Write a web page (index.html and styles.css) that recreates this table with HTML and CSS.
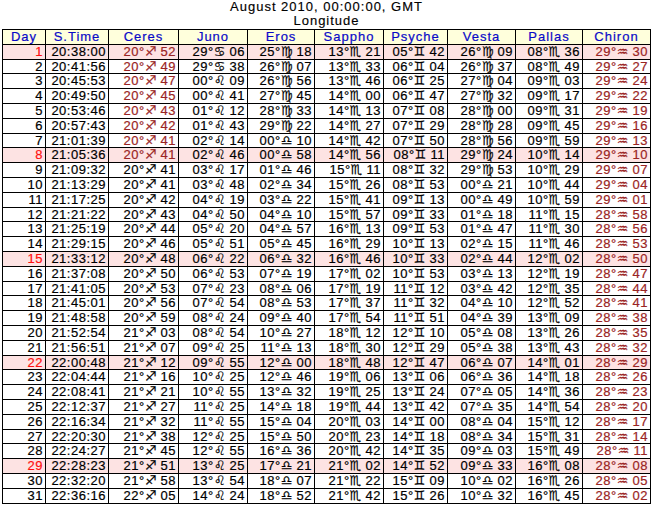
FILE: index.html
```html
<!DOCTYPE html>
<html>
<head>
<meta charset="utf-8">
<title>August 2010 Longitude</title>
<link rel="stylesheet" href="styles.css">
</head>
<body>
<div class="title">August 2010, 00:00:00, GMT<br>Longitude</div>
<table class="eph">
<colgroup>
<col class="c-day"><col class="c-time"><col class="c-ceres"><col class="c-juno"><col class="c-eros"><col class="c-sappho"><col class="c-psyche"><col class="c-vesta"><col class="c-pallas"><col class="c-chiron">
</colgroup>
<thead>
<tr><th>Day</th><th>S.Time</th><th>Ceres</th><th>Juno</th><th>Eros</th><th>Sappho</th><th>Psyche</th><th>Vesta</th><th>Pallas</th><th>Chiron</th></tr>
</thead>
<tbody>
<tr class="hl"><td class="day">1</td><td>20:38:00</td><td class="rx">20°<span class="z">&#x2650;&#xFE0E;</span> 52</td><td>29°<span class="z">&#x264B;&#xFE0E;</span> 06</td><td>25°<span class="z">&#x264D;&#xFE0E;</span> 18</td><td>13°<span class="z">&#x264F;&#xFE0E;</span> 21</td><td>05°<span class="z">&#x264A;&#xFE0E;</span> 42</td><td>26°<span class="z">&#x264D;&#xFE0E;</span> 09</td><td>08°<span class="z">&#x264F;&#xFE0E;</span> 36</td><td class="rx">29°<span class="z">&#x2652;&#xFE0E;</span> 30</td></tr>
<tr><td class="day">2</td><td>20:41:56</td><td class="rx">20°<span class="z">&#x2650;&#xFE0E;</span> 49</td><td>29°<span class="z">&#x264B;&#xFE0E;</span> 38</td><td>26°<span class="z">&#x264D;&#xFE0E;</span> 07</td><td>13°<span class="z">&#x264F;&#xFE0E;</span> 33</td><td>06°<span class="z">&#x264A;&#xFE0E;</span> 04</td><td>26°<span class="z">&#x264D;&#xFE0E;</span> 37</td><td>08°<span class="z">&#x264F;&#xFE0E;</span> 49</td><td class="rx">29°<span class="z">&#x2652;&#xFE0E;</span> 27</td></tr>
<tr><td class="day">3</td><td>20:45:53</td><td class="rx">20°<span class="z">&#x2650;&#xFE0E;</span> 47</td><td>00°<span class="z">&#x264C;&#xFE0E;</span> 09</td><td>26°<span class="z">&#x264D;&#xFE0E;</span> 56</td><td>13°<span class="z">&#x264F;&#xFE0E;</span> 46</td><td>06°<span class="z">&#x264A;&#xFE0E;</span> 25</td><td>27°<span class="z">&#x264D;&#xFE0E;</span> 04</td><td>09°<span class="z">&#x264F;&#xFE0E;</span> 03</td><td class="rx">29°<span class="z">&#x2652;&#xFE0E;</span> 24</td></tr>
<tr><td class="day">4</td><td>20:49:50</td><td class="rx">20°<span class="z">&#x2650;&#xFE0E;</span> 45</td><td>00°<span class="z">&#x264C;&#xFE0E;</span> 41</td><td>27°<span class="z">&#x264D;&#xFE0E;</span> 45</td><td>14°<span class="z">&#x264F;&#xFE0E;</span> 00</td><td>06°<span class="z">&#x264A;&#xFE0E;</span> 47</td><td>27°<span class="z">&#x264D;&#xFE0E;</span> 32</td><td>09°<span class="z">&#x264F;&#xFE0E;</span> 17</td><td class="rx">29°<span class="z">&#x2652;&#xFE0E;</span> 22</td></tr>
<tr><td class="day">5</td><td>20:53:46</td><td class="rx">20°<span class="z">&#x2650;&#xFE0E;</span> 43</td><td>01°<span class="z">&#x264C;&#xFE0E;</span> 12</td><td>28°<span class="z">&#x264D;&#xFE0E;</span> 33</td><td>14°<span class="z">&#x264F;&#xFE0E;</span> 13</td><td>07°<span class="z">&#x264A;&#xFE0E;</span> 08</td><td>28°<span class="z">&#x264D;&#xFE0E;</span> 00</td><td>09°<span class="z">&#x264F;&#xFE0E;</span> 31</td><td class="rx">29°<span class="z">&#x2652;&#xFE0E;</span> 19</td></tr>
<tr><td class="day">6</td><td>20:57:43</td><td class="rx">20°<span class="z">&#x2650;&#xFE0E;</span> 42</td><td>01°<span class="z">&#x264C;&#xFE0E;</span> 43</td><td>29°<span class="z">&#x264D;&#xFE0E;</span> 22</td><td>14°<span class="z">&#x264F;&#xFE0E;</span> 27</td><td>07°<span class="z">&#x264A;&#xFE0E;</span> 29</td><td>28°<span class="z">&#x264D;&#xFE0E;</span> 28</td><td>09°<span class="z">&#x264F;&#xFE0E;</span> 45</td><td class="rx">29°<span class="z">&#x2652;&#xFE0E;</span> 16</td></tr>
<tr><td class="day">7</td><td>21:01:39</td><td class="rx">20°<span class="z">&#x2650;&#xFE0E;</span> 41</td><td>02°<span class="z">&#x264C;&#xFE0E;</span> 14</td><td>00°<span class="z">&#x264E;&#xFE0E;</span> 10</td><td>14°<span class="z">&#x264F;&#xFE0E;</span> 42</td><td>07°<span class="z">&#x264A;&#xFE0E;</span> 50</td><td>28°<span class="z">&#x264D;&#xFE0E;</span> 56</td><td>09°<span class="z">&#x264F;&#xFE0E;</span> 59</td><td class="rx">29°<span class="z">&#x2652;&#xFE0E;</span> 13</td></tr>
<tr class="hl"><td class="day">8</td><td>21:05:36</td><td class="rx">20°<span class="z">&#x2650;&#xFE0E;</span> 41</td><td>02°<span class="z">&#x264C;&#xFE0E;</span> 46</td><td>00°<span class="z">&#x264E;&#xFE0E;</span> 58</td><td>14°<span class="z">&#x264F;&#xFE0E;</span> 56</td><td>08°<span class="z">&#x264A;&#xFE0E;</span> 11</td><td>29°<span class="z">&#x264D;&#xFE0E;</span> 24</td><td>10°<span class="z">&#x264F;&#xFE0E;</span> 14</td><td class="rx">29°<span class="z">&#x2652;&#xFE0E;</span> 10</td></tr>
<tr><td class="day">9</td><td>21:09:32</td><td>20°<span class="z">&#x2650;&#xFE0E;</span> 41</td><td>03°<span class="z">&#x264C;&#xFE0E;</span> 17</td><td>01°<span class="z">&#x264E;&#xFE0E;</span> 46</td><td>15°<span class="z">&#x264F;&#xFE0E;</span> 11</td><td>08°<span class="z">&#x264A;&#xFE0E;</span> 32</td><td>29°<span class="z">&#x264D;&#xFE0E;</span> 53</td><td>10°<span class="z">&#x264F;&#xFE0E;</span> 29</td><td class="rx">29°<span class="z">&#x2652;&#xFE0E;</span> 07</td></tr>
<tr><td class="day">10</td><td>21:13:29</td><td>20°<span class="z">&#x2650;&#xFE0E;</span> 41</td><td>03°<span class="z">&#x264C;&#xFE0E;</span> 48</td><td>02°<span class="z">&#x264E;&#xFE0E;</span> 34</td><td>15°<span class="z">&#x264F;&#xFE0E;</span> 26</td><td>08°<span class="z">&#x264A;&#xFE0E;</span> 53</td><td>00°<span class="z">&#x264E;&#xFE0E;</span> 21</td><td>10°<span class="z">&#x264F;&#xFE0E;</span> 44</td><td class="rx">29°<span class="z">&#x2652;&#xFE0E;</span> 04</td></tr>
<tr><td class="day">11</td><td>21:17:25</td><td>20°<span class="z">&#x2650;&#xFE0E;</span> 42</td><td>04°<span class="z">&#x264C;&#xFE0E;</span> 19</td><td>03°<span class="z">&#x264E;&#xFE0E;</span> 22</td><td>15°<span class="z">&#x264F;&#xFE0E;</span> 41</td><td>09°<span class="z">&#x264A;&#xFE0E;</span> 13</td><td>00°<span class="z">&#x264E;&#xFE0E;</span> 49</td><td>10°<span class="z">&#x264F;&#xFE0E;</span> 59</td><td class="rx">29°<span class="z">&#x2652;&#xFE0E;</span> 01</td></tr>
<tr><td class="day">12</td><td>21:21:22</td><td>20°<span class="z">&#x2650;&#xFE0E;</span> 43</td><td>04°<span class="z">&#x264C;&#xFE0E;</span> 50</td><td>04°<span class="z">&#x264E;&#xFE0E;</span> 10</td><td>15°<span class="z">&#x264F;&#xFE0E;</span> 57</td><td>09°<span class="z">&#x264A;&#xFE0E;</span> 33</td><td>01°<span class="z">&#x264E;&#xFE0E;</span> 18</td><td>11°<span class="z">&#x264F;&#xFE0E;</span> 15</td><td class="rx">28°<span class="z">&#x2652;&#xFE0E;</span> 58</td></tr>
<tr><td class="day">13</td><td>21:25:19</td><td>20°<span class="z">&#x2650;&#xFE0E;</span> 44</td><td>05°<span class="z">&#x264C;&#xFE0E;</span> 20</td><td>04°<span class="z">&#x264E;&#xFE0E;</span> 57</td><td>16°<span class="z">&#x264F;&#xFE0E;</span> 13</td><td>09°<span class="z">&#x264A;&#xFE0E;</span> 53</td><td>01°<span class="z">&#x264E;&#xFE0E;</span> 47</td><td>11°<span class="z">&#x264F;&#xFE0E;</span> 30</td><td class="rx">28°<span class="z">&#x2652;&#xFE0E;</span> 56</td></tr>
<tr><td class="day">14</td><td>21:29:15</td><td>20°<span class="z">&#x2650;&#xFE0E;</span> 46</td><td>05°<span class="z">&#x264C;&#xFE0E;</span> 51</td><td>05°<span class="z">&#x264E;&#xFE0E;</span> 45</td><td>16°<span class="z">&#x264F;&#xFE0E;</span> 29</td><td>10°<span class="z">&#x264A;&#xFE0E;</span> 13</td><td>02°<span class="z">&#x264E;&#xFE0E;</span> 15</td><td>11°<span class="z">&#x264F;&#xFE0E;</span> 46</td><td class="rx">28°<span class="z">&#x2652;&#xFE0E;</span> 53</td></tr>
<tr class="hl"><td class="day">15</td><td>21:33:12</td><td>20°<span class="z">&#x2650;&#xFE0E;</span> 48</td><td>06°<span class="z">&#x264C;&#xFE0E;</span> 22</td><td>06°<span class="z">&#x264E;&#xFE0E;</span> 32</td><td>16°<span class="z">&#x264F;&#xFE0E;</span> 46</td><td>10°<span class="z">&#x264A;&#xFE0E;</span> 33</td><td>02°<span class="z">&#x264E;&#xFE0E;</span> 44</td><td>12°<span class="z">&#x264F;&#xFE0E;</span> 02</td><td class="rx">28°<span class="z">&#x2652;&#xFE0E;</span> 50</td></tr>
<tr><td class="day">16</td><td>21:37:08</td><td>20°<span class="z">&#x2650;&#xFE0E;</span> 50</td><td>06°<span class="z">&#x264C;&#xFE0E;</span> 53</td><td>07°<span class="z">&#x264E;&#xFE0E;</span> 19</td><td>17°<span class="z">&#x264F;&#xFE0E;</span> 02</td><td>10°<span class="z">&#x264A;&#xFE0E;</span> 53</td><td>03°<span class="z">&#x264E;&#xFE0E;</span> 13</td><td>12°<span class="z">&#x264F;&#xFE0E;</span> 19</td><td class="rx">28°<span class="z">&#x2652;&#xFE0E;</span> 47</td></tr>
<tr><td class="day">17</td><td>21:41:05</td><td>20°<span class="z">&#x2650;&#xFE0E;</span> 53</td><td>07°<span class="z">&#x264C;&#xFE0E;</span> 23</td><td>08°<span class="z">&#x264E;&#xFE0E;</span> 06</td><td>17°<span class="z">&#x264F;&#xFE0E;</span> 19</td><td>11°<span class="z">&#x264A;&#xFE0E;</span> 12</td><td>03°<span class="z">&#x264E;&#xFE0E;</span> 42</td><td>12°<span class="z">&#x264F;&#xFE0E;</span> 35</td><td class="rx">28°<span class="z">&#x2652;&#xFE0E;</span> 44</td></tr>
<tr><td class="day">18</td><td>21:45:01</td><td>20°<span class="z">&#x2650;&#xFE0E;</span> 56</td><td>07°<span class="z">&#x264C;&#xFE0E;</span> 54</td><td>08°<span class="z">&#x264E;&#xFE0E;</span> 53</td><td>17°<span class="z">&#x264F;&#xFE0E;</span> 37</td><td>11°<span class="z">&#x264A;&#xFE0E;</span> 32</td><td>04°<span class="z">&#x264E;&#xFE0E;</span> 10</td><td>12°<span class="z">&#x264F;&#xFE0E;</span> 52</td><td class="rx">28°<span class="z">&#x2652;&#xFE0E;</span> 41</td></tr>
<tr><td class="day">19</td><td>21:48:58</td><td>20°<span class="z">&#x2650;&#xFE0E;</span> 59</td><td>08°<span class="z">&#x264C;&#xFE0E;</span> 24</td><td>09°<span class="z">&#x264E;&#xFE0E;</span> 40</td><td>17°<span class="z">&#x264F;&#xFE0E;</span> 54</td><td>11°<span class="z">&#x264A;&#xFE0E;</span> 51</td><td>04°<span class="z">&#x264E;&#xFE0E;</span> 39</td><td>13°<span class="z">&#x264F;&#xFE0E;</span> 09</td><td class="rx">28°<span class="z">&#x2652;&#xFE0E;</span> 38</td></tr>
<tr><td class="day">20</td><td>21:52:54</td><td>21°<span class="z">&#x2650;&#xFE0E;</span> 03</td><td>08°<span class="z">&#x264C;&#xFE0E;</span> 54</td><td>10°<span class="z">&#x264E;&#xFE0E;</span> 27</td><td>18°<span class="z">&#x264F;&#xFE0E;</span> 12</td><td>12°<span class="z">&#x264A;&#xFE0E;</span> 10</td><td>05°<span class="z">&#x264E;&#xFE0E;</span> 08</td><td>13°<span class="z">&#x264F;&#xFE0E;</span> 26</td><td class="rx">28°<span class="z">&#x2652;&#xFE0E;</span> 35</td></tr>
<tr><td class="day">21</td><td>21:56:51</td><td>21°<span class="z">&#x2650;&#xFE0E;</span> 07</td><td>09°<span class="z">&#x264C;&#xFE0E;</span> 25</td><td>11°<span class="z">&#x264E;&#xFE0E;</span> 13</td><td>18°<span class="z">&#x264F;&#xFE0E;</span> 30</td><td>12°<span class="z">&#x264A;&#xFE0E;</span> 29</td><td>05°<span class="z">&#x264E;&#xFE0E;</span> 38</td><td>13°<span class="z">&#x264F;&#xFE0E;</span> 43</td><td class="rx">28°<span class="z">&#x2652;&#xFE0E;</span> 32</td></tr>
<tr class="hl"><td class="day">22</td><td>22:00:48</td><td>21°<span class="z">&#x2650;&#xFE0E;</span> 12</td><td>09°<span class="z">&#x264C;&#xFE0E;</span> 55</td><td>12°<span class="z">&#x264E;&#xFE0E;</span> 00</td><td>18°<span class="z">&#x264F;&#xFE0E;</span> 48</td><td>12°<span class="z">&#x264A;&#xFE0E;</span> 47</td><td>06°<span class="z">&#x264E;&#xFE0E;</span> 07</td><td>14°<span class="z">&#x264F;&#xFE0E;</span> 01</td><td class="rx">28°<span class="z">&#x2652;&#xFE0E;</span> 29</td></tr>
<tr><td class="day">23</td><td>22:04:44</td><td>21°<span class="z">&#x2650;&#xFE0E;</span> 16</td><td>10°<span class="z">&#x264C;&#xFE0E;</span> 25</td><td>12°<span class="z">&#x264E;&#xFE0E;</span> 46</td><td>19°<span class="z">&#x264F;&#xFE0E;</span> 06</td><td>13°<span class="z">&#x264A;&#xFE0E;</span> 06</td><td>06°<span class="z">&#x264E;&#xFE0E;</span> 36</td><td>14°<span class="z">&#x264F;&#xFE0E;</span> 18</td><td class="rx">28°<span class="z">&#x2652;&#xFE0E;</span> 26</td></tr>
<tr><td class="day">24</td><td>22:08:41</td><td>21°<span class="z">&#x2650;&#xFE0E;</span> 21</td><td>10°<span class="z">&#x264C;&#xFE0E;</span> 55</td><td>13°<span class="z">&#x264E;&#xFE0E;</span> 32</td><td>19°<span class="z">&#x264F;&#xFE0E;</span> 25</td><td>13°<span class="z">&#x264A;&#xFE0E;</span> 24</td><td>07°<span class="z">&#x264E;&#xFE0E;</span> 05</td><td>14°<span class="z">&#x264F;&#xFE0E;</span> 36</td><td class="rx">28°<span class="z">&#x2652;&#xFE0E;</span> 23</td></tr>
<tr><td class="day">25</td><td>22:12:37</td><td>21°<span class="z">&#x2650;&#xFE0E;</span> 27</td><td>11°<span class="z">&#x264C;&#xFE0E;</span> 25</td><td>14°<span class="z">&#x264E;&#xFE0E;</span> 18</td><td>19°<span class="z">&#x264F;&#xFE0E;</span> 44</td><td>13°<span class="z">&#x264A;&#xFE0E;</span> 42</td><td>07°<span class="z">&#x264E;&#xFE0E;</span> 35</td><td>14°<span class="z">&#x264F;&#xFE0E;</span> 54</td><td class="rx">28°<span class="z">&#x2652;&#xFE0E;</span> 20</td></tr>
<tr><td class="day">26</td><td>22:16:34</td><td>21°<span class="z">&#x2650;&#xFE0E;</span> 32</td><td>11°<span class="z">&#x264C;&#xFE0E;</span> 55</td><td>15°<span class="z">&#x264E;&#xFE0E;</span> 04</td><td>20°<span class="z">&#x264F;&#xFE0E;</span> 03</td><td>14°<span class="z">&#x264A;&#xFE0E;</span> 00</td><td>08°<span class="z">&#x264E;&#xFE0E;</span> 04</td><td>15°<span class="z">&#x264F;&#xFE0E;</span> 12</td><td class="rx">28°<span class="z">&#x2652;&#xFE0E;</span> 17</td></tr>
<tr><td class="day">27</td><td>22:20:30</td><td>21°<span class="z">&#x2650;&#xFE0E;</span> 38</td><td>12°<span class="z">&#x264C;&#xFE0E;</span> 25</td><td>15°<span class="z">&#x264E;&#xFE0E;</span> 50</td><td>20°<span class="z">&#x264F;&#xFE0E;</span> 23</td><td>14°<span class="z">&#x264A;&#xFE0E;</span> 18</td><td>08°<span class="z">&#x264E;&#xFE0E;</span> 34</td><td>15°<span class="z">&#x264F;&#xFE0E;</span> 31</td><td class="rx">28°<span class="z">&#x2652;&#xFE0E;</span> 14</td></tr>
<tr><td class="day">28</td><td>22:24:27</td><td>21°<span class="z">&#x2650;&#xFE0E;</span> 45</td><td>12°<span class="z">&#x264C;&#xFE0E;</span> 55</td><td>16°<span class="z">&#x264E;&#xFE0E;</span> 36</td><td>20°<span class="z">&#x264F;&#xFE0E;</span> 42</td><td>14°<span class="z">&#x264A;&#xFE0E;</span> 35</td><td>09°<span class="z">&#x264E;&#xFE0E;</span> 03</td><td>15°<span class="z">&#x264F;&#xFE0E;</span> 49</td><td class="rx">28°<span class="z">&#x2652;&#xFE0E;</span> 11</td></tr>
<tr class="hl"><td class="day">29</td><td>22:28:23</td><td>21°<span class="z">&#x2650;&#xFE0E;</span> 51</td><td>13°<span class="z">&#x264C;&#xFE0E;</span> 25</td><td>17°<span class="z">&#x264E;&#xFE0E;</span> 21</td><td>21°<span class="z">&#x264F;&#xFE0E;</span> 02</td><td>14°<span class="z">&#x264A;&#xFE0E;</span> 52</td><td>09°<span class="z">&#x264E;&#xFE0E;</span> 33</td><td>16°<span class="z">&#x264F;&#xFE0E;</span> 08</td><td class="rx">28°<span class="z">&#x2652;&#xFE0E;</span> 08</td></tr>
<tr><td class="day">30</td><td>22:32:20</td><td>21°<span class="z">&#x2650;&#xFE0E;</span> 58</td><td>13°<span class="z">&#x264C;&#xFE0E;</span> 54</td><td>18°<span class="z">&#x264E;&#xFE0E;</span> 07</td><td>21°<span class="z">&#x264F;&#xFE0E;</span> 22</td><td>15°<span class="z">&#x264A;&#xFE0E;</span> 09</td><td>10°<span class="z">&#x264E;&#xFE0E;</span> 02</td><td>16°<span class="z">&#x264F;&#xFE0E;</span> 26</td><td class="rx">28°<span class="z">&#x2652;&#xFE0E;</span> 05</td></tr>
<tr><td class="day">31</td><td>22:36:16</td><td>22°<span class="z">&#x2650;&#xFE0E;</span> 05</td><td>14°<span class="z">&#x264C;&#xFE0E;</span> 24</td><td>18°<span class="z">&#x264E;&#xFE0E;</span> 52</td><td>21°<span class="z">&#x264F;&#xFE0E;</span> 42</td><td>15°<span class="z">&#x264A;&#xFE0E;</span> 26</td><td>10°<span class="z">&#x264E;&#xFE0E;</span> 32</td><td>16°<span class="z">&#x264F;&#xFE0E;</span> 45</td><td class="rx">28°<span class="z">&#x2652;&#xFE0E;</span> 02</td></tr>
</tbody>
</table>
</body>
</html>
```
FILE: styles.css
```css
html, body {
  margin: 0;
  padding: 0;
  background: #ffffff;
}
body {
  padding-left: 2px;
  font-family: "Liberation Sans", Arial, sans-serif;
  font-size: 13px;
  color: #000000;
}
.title {
  width: 649px;
  text-align: center;
  line-height: 14px;
  letter-spacing: 1px;
  -webkit-text-stroke: 0.15px currentColor;
}
.eph {
  border-collapse: collapse;
  table-layout: fixed;
  width: 649px;
  margin-top: 1px;
}
.c-day { width: 43px; }
.c-time { width: 63px; }
.c-ceres { width: 70px; }
.c-juno { width: 69px; }
.c-eros { width: 67px; }
.c-sappho { width: 69px; }
.c-psyche { width: 64px; }
.c-vesta { width: 68px; }
.c-pallas { width: 67px; }
.c-chiron { width: 68px; }
.eph th,
.eph td {
  border: 1px solid #000000;
  padding: 0 2px 0 0;
  height: 13.8px;
  line-height: 13.8px;
  white-space: nowrap;
  overflow: hidden;
  font-weight: normal;
  -webkit-text-stroke: 0.2px currentColor;
}
.eph th {
  background: #ffffdc;
  color: #0a0ac8;
  text-align: center;
  letter-spacing: 1px;
  padding: 0;
}
.eph td {
  text-align: right;
  letter-spacing: 0.5px;
}
.eph tr.hl td {
  background: #fde3e3;
}
.eph tr.hl td.day {
  color: #ff1010;
}
.eph td.rx {
  color: #9a2424;
}
.z {
  font-family: "DejaVu Sans", sans-serif;
  font-size: 13px;
  line-height: 0;
  letter-spacing: 0;
}
```
